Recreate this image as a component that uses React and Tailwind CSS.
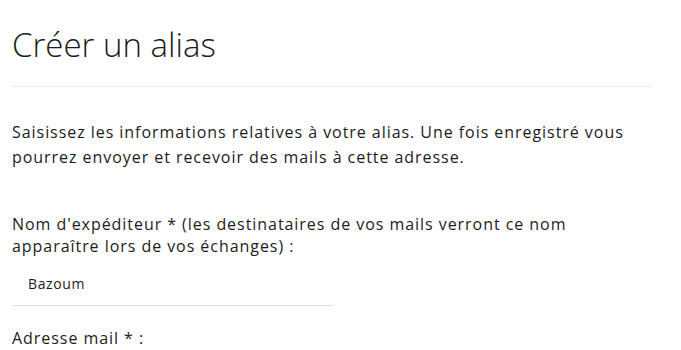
export default function App() {
  return (
    <div className="min-h-[350px] bg-white px-3 pt-[26px] text-[#1c1c1c]" style={{ fontFamily: '"Open Sans", sans-serif' }}>
      <div className="w-[639px]">
        <h1 className="text-[33px] font-light leading-[38px]">Créer un alias</h1>
        <hr className="mt-[22px] border-t border-[#ececec]" />
        <p className="mt-[33px] text-[16px] leading-[25px] tracking-[0.95px]">
          Saisissez les informations relatives à votre alias. Une fois enregistré vous pourrez envoyer et
          recevoir des mails à cette adresse.
        </p>
        <form className="mt-[43px]">
          <label className="block w-[600px] text-[16px] leading-[22px] tracking-[0.95px]">
            Nom d'expéditeur * (les destinataires de vos mails verront ce nom apparaître lors de vos échanges) :
          </label>
          <input
            type="text"
            value="Bazoum"
            readOnly
            className="mt-[9px] block w-[321px] border-b border-[#dddddd] pb-[11px] pl-4 pt-2 text-[14px] leading-5 tracking-[0.6px] outline-none"
          />
          <label className="mt-[21px] block text-[16px] leading-[22px] tracking-[0.95px]">Adresse mail * :</label>
        </form>
      </div>
    </div>
  );
}
